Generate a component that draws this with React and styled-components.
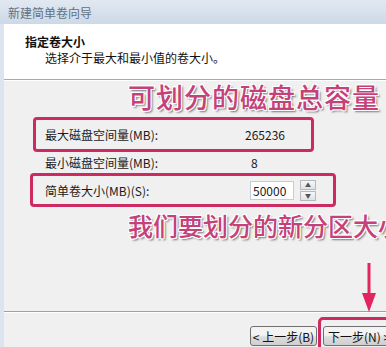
import React from "react";
import styled, { createGlobalStyle } from "styled-components";

const GlobalStyle = createGlobalStyle`
  html, body {
    margin: 0;
    padding: 0;
    overflow: hidden;
  }
  body {
    font-family: "Noto Sans CJK SC", "Liberation Sans", sans-serif;
    font-size: 12px;
  }
`;

const Window = styled.div`
  position: relative;
  width: 386px;
  height: 347px;
  display: flex;
  flex-direction: column;
  overflow: hidden;
  background: #f0f0f0;
`;

const TitleBar = styled.div`
  height: 24px;
  flex-shrink: 0;
  display: flex;
  align-items: center;
  padding-left: 8px;
  color: #617083;
  font-size: 12px;
  background: linear-gradient(#e1e8f1, #cdd9e7);
`;

const Main = styled.div`
  flex: 1;
  display: flex;
  min-height: 0;
`;

const SideStrip = styled.div`
  width: 4px;
  flex-shrink: 0;
  background: #dce4f2;
`;

const Content = styled.div`
  flex: 1;
  display: flex;
  flex-direction: column;
  min-width: 0;
`;

const Header = styled.div`
  height: 56px;
  flex-shrink: 0;
  background: #fff;
  border-bottom: 1px solid #a9a9a9;
  box-shadow: 0 1px 0 #fff;
  padding: 10px 0 0 21px;
  box-sizing: border-box;
  color: #111;
`;

const HeaderTitle = styled.div`
  font-weight: bold;
  line-height: 16px;
`;

const HeaderSub = styled.div`
  line-height: 16px;
  padding-left: 20px;
`;

const Body = styled.div`
  flex: 1;
  display: flex;
  flex-direction: column;
  padding-top: 2px;
`;

const Annotation = styled.div`
  margin-left: 124px;
  margin-top: ${(p) => p.$top}px;
  font-size: ${(p) => p.$size}px;
  line-height: ${(p) => p.$size + 3}px;
  font-weight: 500;
  white-space: nowrap;
  color: #c4417a;
  letter-spacing: ${(p) => p.$spacing || 0}px;
  text-shadow: -1px -1px 0 #fff, 1px -1px 0 #fff, -1px 1px 0 #fff,
    1px 1px 0 #fff, 0 -1px 0 #fff, 0 1px 0 #fff, 2px 2px 2px rgba(0, 0, 0, 0.5);
`;

const Frame = styled.div`
  margin-left: ${(p) => p.$left}px;
  width: ${(p) => p.$width}px;
  margin-top: ${(p) => p.$top}px;
  border: 3px solid #cc2a60;
  border-radius: 4px;
  box-sizing: border-box;
  padding-left: ${(p) => p.$pad}px;
  height: ${(p) => p.$height}px;
  display: flex;
  align-items: center;
`;

const Row = styled.div`
  display: flex;
  align-items: center;
  color: #1a1a1a;
  margin-left: ${(p) => p.$left || 0}px;
  height: ${(p) => p.$height || 22}px;
`;

const Label = styled.span`
  width: ${(p) => p.$width}px;
  flex-shrink: 0;
`;

const Value = styled.span``;

const Input = styled.div`
  width: 44px;
  height: 19px;
  background: #fff;
  border: 1px solid #c9ccd2;
  display: flex;
  align-items: center;
  padding-left: 2px;
  box-sizing: border-box;
`;

const Spinner = styled.div`
  margin-left: 6px;
  width: 16px;
  display: flex;
  flex-direction: column;
  gap: 1px;
`;

const SpinButton = styled.div`
  height: 8px;
  border: 1px solid #b4b8bf;
  background: linear-gradient(#f7f7f7, #e2e2e2);
  display: flex;
  align-items: center;
  justify-content: center;
  font-size: 6px;
  color: #555;
  line-height: 1;
`;

const Spacer = styled.div`
  flex: 1;
`;

const Footer = styled.div`
  height: 36px;
  flex-shrink: 0;
  border-top: 1px solid #a0a0a0;
  box-shadow: inset 0 1px 0 #fff;
  display: flex;
  align-items: flex-start;
  padding: 5px 0 0 246px;
  box-sizing: border-box;
`;

const Button = styled.div`
  flex-shrink: 0;
  width: ${(p) => p.$width}px;
  height: 20px;
  margin-top: ${(p) => p.$top || 0}px;
  margin-right: ${(p) => p.$gap || 0}px;
  padding-left: ${(p) => p.$pad || 0}px;
  border: 1px solid #707070;
  border-radius: 3px;
  box-sizing: border-box;
  background: linear-gradient(#f3f3f3 45%, #dddddd 55%, #cfcfcf);
  display: flex;
  align-items: center;
  justify-content: ${(p) => (p.$pad ? "flex-start" : "center")};
  color: #111;
  white-space: nowrap;
`;

const Highlight = styled.div`
  flex-shrink: 0;
  display: flex;
  border: 3px solid #cc2a60;
  border-radius: 5px;
  padding: 6px 2px 8px 2px;
`;

const Arrow = styled.svg`
  position: absolute;
  left: 361px;
  top: 263px;
`;

export default function App() {
  return (
    <>
      <GlobalStyle />
      <Window>
        <TitleBar>新建简单卷向导</TitleBar>
        <Main>
          <SideStrip />
          <Content>
            <Header>
              <HeaderTitle>指定卷大小</HeaderTitle>
              <HeaderSub>选择介于最大和最小值的卷大小。</HeaderSub>
            </Header>
            <Body>
              <Annotation $top={0} $size={27} $spacing={1}>
                可划分的磁盘总容量
              </Annotation>
              <Frame $left={29} $width={281} $top={5} $height={35} $pad={9}>
                <Row>
                  <Label $width={200}>最大磁盘空间量(MB):</Label>
                  <Value>265236</Value>
                </Row>
              </Frame>
              <Row $left={41} $height={21}>
                <Label $width={206}>最小磁盘空间量(MB):</Label>
                <Value>8</Value>
              </Row>
              <Frame $left={26} $width={306} $top={0} $height={34} $pad={12}>
                <Row>
                  <Label $width={205}>简单卷大小(MB)(S):</Label>
                  <Input>50000</Input>
                  <Spinner>
                    <SpinButton>▲</SpinButton>
                    <SpinButton>▼</SpinButton>
                  </Spinner>
                </Row>
              </Frame>
              <Annotation $top={4} $size={25}>
                我们要划分的新分区大小
              </Annotation>
              <Spacer />
            </Body>
            <Footer>
              <Button $width={67} $top={9} $gap={1}>
                &lt; 上一步(B)
              </Button>
              <Highlight>
                <Button $width={76} $pad={4}>
                  下一步(N) &gt;
                </Button>
              </Highlight>
            </Footer>
          </Content>
        </Main>
        <Arrow width="16" height="50" viewBox="0 0 16 50">
          <rect x="6.5" y="0" width="3" height="34" fill="#e2245f" />
          <path d="M1 30 L15 30 L8 49 Z" fill="#e2245f" />
        </Arrow>
      </Window>
    </>
  );
}
